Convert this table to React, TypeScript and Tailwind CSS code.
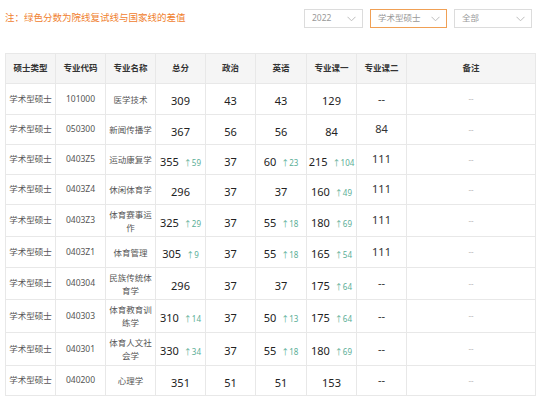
type Score = { v: string; up?: string };

type Row = {
  code: string;
  name: string;
  total: Score;
  politics: Score;
  english: Score;
  major1: Score;
  major2: string;
  h: string;
};

const rows: Row[] = [
  { code: '101000', name: '医学技术', total: { v: '309' }, politics: { v: '43' }, english: { v: '43' }, major1: { v: '129' }, major2: '--', h: 'h-[31px]' },
  { code: '050300', name: '新闻传播学', total: { v: '367' }, politics: { v: '56' }, english: { v: '56' }, major1: { v: '84' }, major2: '84', h: 'h-[30px]' },
  { code: '0403Z5', name: '运动康复学', total: { v: '355', up: '59' }, politics: { v: '37' }, english: { v: '60', up: '23' }, major1: { v: '215', up: '104' }, major2: '111', h: 'h-[30px]' },
  { code: '0403Z4', name: '休闲体育学', total: { v: '296' }, politics: { v: '37' }, english: { v: '37' }, major1: { v: '160', up: '49' }, major2: '111', h: 'h-[30px]' },
  { code: '0403Z3', name: '体育赛事运作', total: { v: '325', up: '29' }, politics: { v: '37' }, english: { v: '55', up: '18' }, major1: { v: '180', up: '69' }, major2: '111', h: 'h-[32px]' },
  { code: '0403Z1', name: '体育管理', total: { v: '305', up: '9' }, politics: { v: '37' }, english: { v: '55', up: '18' }, major1: { v: '165', up: '54' }, major2: '111', h: 'h-[31px]' },
  { code: '040304', name: '民族传统体育学', total: { v: '296' }, politics: { v: '37' }, english: { v: '37' }, major1: { v: '175', up: '64' }, major2: '--', h: 'h-[32px]' },
  { code: '040303', name: '体育教育训练学', total: { v: '310', up: '14' }, politics: { v: '37' }, english: { v: '50', up: '13' }, major1: { v: '175', up: '64' }, major2: '--', h: 'h-[33px]' },
  { code: '040301', name: '体育人文社会学', total: { v: '330', up: '34' }, politics: { v: '37' }, english: { v: '55', up: '18' }, major1: { v: '180', up: '69' }, major2: '--', h: 'h-[33px]' },
  { code: '040200', name: '心理学', total: { v: '351' }, politics: { v: '51' }, english: { v: '51' }, major1: { v: '153' }, major2: '--', h: 'h-[30px]' },
];

const headers = ['硕士类型', '专业代码', '专业名称', '总分', '政治', '英语', '专业课一', '专业课二', '备注'];
const widths = ['w-[50px]', 'w-[50px]', 'w-[50px]', 'w-[50px]', 'w-[50px]', 'w-[51px]', 'w-[50px]', 'w-[50px]', 'w-[129px]'];

const cell = 'border border-[#e8e8e8] text-center align-middle';

function ScoreCell({ s }: { s: Score }) {
  return (
    <td className={cell}>
      <span className="inline-flex items-baseline justify-center gap-[5px] whitespace-nowrap leading-none">
        <span className="text-[11px] text-[#222]">{s.v}</span>
        {s.up && <span className="text-[8px] text-[#5aae96]">↑{s.up}</span>}
      </span>
    </td>
  );
}

function Select({ label, active }: { label: string; active?: boolean }) {
  return (
    <div
      className={`flex h-[19px] items-center border bg-white pl-[7px] pr-[6px] ${
        active ? 'border-[#f0a055]' : 'border-[#dcdcdc]'
      }`}
    >
      <span className="min-w-0 flex-1 whitespace-nowrap text-[8.5px] leading-none text-[#999]">{label}</span>
      <svg className="shrink-0" width="9" height="6" viewBox="0 0 9 6" fill="none">
        <path d="M0.5 0.8 L4.5 4.8 L8.5 0.8" stroke="#bdbdbd" strokeWidth="1" />
      </svg>
    </div>
  );
}

export default function App() {
  return (
    <div className="h-[401px] w-[540px] bg-white font-['Noto_Sans','Noto_Sans_CJK_SC',sans-serif]">
      {/* Top bar */}
      <div className="flex items-center px-[5px] pt-[9px]">
        <p className="flex-1 text-[9.5px] text-[#f0812f]">注：绿色分数为院线复试线与国家线的差值</p>
        <div className="flex gap-[7px] pr-[3px]">
          <div className="w-[59px]"><Select label="2022" /></div>
          <div className="w-[77px]"><Select label="学术型硕士" active /></div>
          <div className="w-[78px]"><Select label="全部" /></div>
        </div>
      </div>

      {/* Table */}
      <div className="mt-[25px] px-[5px]">
        <table className="w-[530px] table-fixed border-collapse">
          <thead>
            <tr className="h-[30px] bg-[#f5f5f5]">
              {headers.map((h, i) => (
                <th key={h} className={`${widths[i]} ${cell} text-[8.5px] font-bold text-[#333]`}>
                  {h}
                </th>
              ))}
            </tr>
          </thead>
          <tbody>
            {rows.map((r) => (
              <tr key={r.code} className={r.h}>
                <td className={`${cell} text-[8.5px] text-[#555]`}>学术型硕士</td>
                <td className={`${cell} text-[8.5px] text-[#555]`}>{r.code}</td>
                <td className={`${cell} text-[8.5px] leading-[13px] text-[#555]`}>
                  <div className="mx-auto w-[44px]">{r.name}</div>
                </td>
                <ScoreCell s={r.total} />
                <ScoreCell s={r.politics} />
                <ScoreCell s={r.english} />
                <ScoreCell s={r.major1} />
                <td className={`${cell} text-[11px] text-[#333]`}>{r.major2}</td>
                <td className={`${cell} text-[8px] text-[#bbb]`}>--</td>
              </tr>
            ))}
          </tbody>
        </table>
      </div>
    </div>
  );
}
